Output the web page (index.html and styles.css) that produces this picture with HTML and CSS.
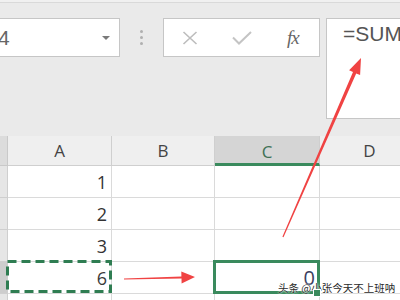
FILE: index.html
```html
<!DOCTYPE html>
<html>
<head>
<meta charset="utf-8">
<link rel="stylesheet" href="styles.css">
</head>
<body>
<div class="app">
  <div class="toolbar">
    <div class="namebox"><span class="ref">4</span><span class="caret"></span></div>
    <div class="grip"><i></i><i></i><i></i></div>
    <div class="fxbox">
      <svg class="ico-x" width="16" height="14" viewBox="0 0 16 14"><path d="M1.5 1 L14.5 13 M14.5 1 L1.5 13" stroke="#bdbdbd" stroke-width="1.6" fill="none"/></svg>
      <svg class="ico-check" width="20" height="14" viewBox="0 0 20 14"><path d="M1 6.5 L7 12.5 L19 1" stroke="#c4c4c4" stroke-width="2" fill="none"/></svg>
      <span class="fx">fx</span>
    </div>
    <div class="formula">=SUM</div>
  </div>
  <div class="sheet">
    <div class="corner"></div>
    <div class="colh">A</div>
    <div class="colh">B</div>
    <div class="colh active">C</div>
    <div class="colh">D</div>

    <div class="rowh"></div><div class="cell">1</div><div class="cell"></div><div class="cell"></div><div class="cell"></div>
    <div class="rowh"></div><div class="cell">2</div><div class="cell"></div><div class="cell"></div><div class="cell"></div>
    <div class="rowh"></div><div class="cell">3</div><div class="cell"></div><div class="cell"></div><div class="cell"></div>
    <div class="rowh active"></div>
    <div class="cell copy">6
      <svg class="ants" width="106" height="33" viewBox="0 0 106 33"><rect x="1.5" y="1.5" width="103" height="30" fill="none" stroke="#2f7d52" stroke-width="3" stroke-dasharray="9 5"/></svg>
    </div>
    <div class="cell"></div>
    <div class="cell current">0<span class="handle"></span></div>
    <div class="cell"></div>
    <div class="rowh"></div><div class="cell"></div><div class="cell"></div><div class="cell"></div><div class="cell"></div>
  </div>
  <svg class="arrows" width="400" height="300" viewBox="0 0 400 300">
    <polygon points="283.5,237.3 282.4,236.8 353.0,72.1 349.1,70.3 361,58 360.1,75.1 356.2,73.4" fill="#f04343"/>
    <polygon points="124,278.6 124,279.6 181.5,278.6 181.6,283.6 195,277 181.3,271.4 181.4,276.4" fill="#f04343"/>
  </svg>
  <div class="watermark">头条 @小张今天不上班呐</div>
</div>
</body>
</html>
```
FILE: styles.css
```css
html, body {
  margin: 0;
  padding: 0;
}
body {
  width: 400px;
  height: 300px;
  overflow: hidden;
  background: #ffffff;
}
.app {
  position: relative;
  width: 400px;
  height: 300px;
  overflow: hidden;
  padding-top: 2px;
  box-sizing: border-box;
  background: #f0f0f0;
  font-family: "Liberation Sans", Arial, sans-serif;
}
.toolbar {
  display: flex;
  align-items: flex-start;
  height: 134px;
  box-sizing: border-box;
  border-top: 1px solid #d9d9d9;
  padding-top: 15px;
  background: #eaeaea;
  overflow: hidden;
}
.namebox {
  flex: none;
  margin-left: -1px;
  width: 121px;
  height: 39px;
  box-sizing: border-box;
  border: 1px solid #c6c6c6;
  background: #ffffff;
  display: flex;
  align-items: center;
  justify-content: space-between;
  padding-right: 9px;
}
.ref {
  font-size: 21px;
  color: #666666;
  margin-left: -2px;
}
.caret {
  width: 0;
  height: 0;
  border-left: 4px solid transparent;
  border-right: 4px solid transparent;
  border-top: 4px solid #7a7a7a;
  margin-top: 1px;
}
.grip {
  flex: none;
  margin-left: 20px;
  margin-top: 12px;
  display: flex;
  flex-direction: column;
  gap: 3px;
}
.grip i {
  display: block;
  width: 3px;
  height: 3px;
  border-radius: 50%;
  background: #b0b0b0;
}
.fxbox {
  flex: none;
  margin-left: 20px;
  width: 157px;
  height: 39px;
  box-sizing: border-box;
  border: 1px solid #c6c6c6;
  background: #ffffff;
  display: flex;
  align-items: center;
  padding-left: 18px;
}
.ico-x {
  display: block;
}
.ico-check {
  display: block;
  margin-left: 34px;
}
.fx {
  margin-left: 35px;
  font-family: "Liberation Serif", "Times New Roman", serif;
  font-style: italic;
  font-size: 19px;
  color: #666666;
  letter-spacing: -1px;
}
.formula {
  flex: none;
  margin-left: 6px;
  width: 100px;
  height: 101px;
  box-sizing: border-box;
  border: 1px solid #c6c6c6;
  background: #ffffff;
  padding-left: 16px;
  padding-top: 3px;
  font-size: 21px;
  color: #555555;
}
.sheet {
  display: grid;
  grid-template-columns: 8px 104px 103px 105px 100px;
  grid-template-rows: 30px 32px 32px 32px 32px 32px;
  background: #ffffff;
}
.corner {
  background: #dcdcdc;
  border-right: 1px solid #c9c9c9;
  border-bottom: 1px solid #c9c9c9;
}
.colh {
  background: #efefef;
  border-right: 1px solid #cfcfcf;
  border-bottom: 1px solid #cfcfcf;
  display: flex;
  align-items: center;
  justify-content: center;
  font-family: "Open Sans", "Liberation Sans", sans-serif;
  font-size: 17px;
  color: #444444;
  box-sizing: border-box;
}
.colh.active {
  background: #d5d5d5;
  border-bottom: 3px solid #3a8a5d;
  color: #3f7056;
  padding-top: 3px;
}
.rowh {
  background: #e6e6e6;
  border-right: 1px solid #cfcfcf;
  border-bottom: 1px solid #cfcfcf;
}
.rowh.active {
  background: #cdcdcd;
}
.cell {
  position: relative;
  border-right: 1px solid #dadada;
  border-bottom: 1px solid #dadada;
  display: flex;
  align-items: center;
  justify-content: flex-end;
  padding-right: 4px;
  font-family: "Open Sans", "Liberation Sans", sans-serif;
  font-size: 18px;
  color: #333333;
}
.cell.copy {
  color: #3a3a3a;
}
.ants {
  position: absolute;
  left: -2px;
  top: -2px;
}
.cell.current {
  color: #3b4060;
  font-size: 20px;
}
.cell.current::after {
  content: "";
  position: absolute;
  left: -2px;
  top: -2px;
  width: 107px;
  height: 34px;
  box-sizing: border-box;
  border: 3px solid #3a8a5d;
}
.handle {
  position: absolute;
  right: -2px;
  bottom: -4px;
  width: 6px;
  height: 6px;
  background: #3a8a5d;
  border: 1px solid #ffffff;
  z-index: 2;
}
.arrows {
  position: absolute;
  left: 0;
  top: 0;
  pointer-events: none;
}
.watermark {
  position: absolute;
  left: 278px;
  top: 280px;
  font-family: "Noto Sans CJK SC", sans-serif;
  font-size: 10.5px;
  color: #2a2a2a;
  text-shadow: 0 0 2px #ffffff, 0 0 2px #ffffff;
  white-space: nowrap;
}
```
